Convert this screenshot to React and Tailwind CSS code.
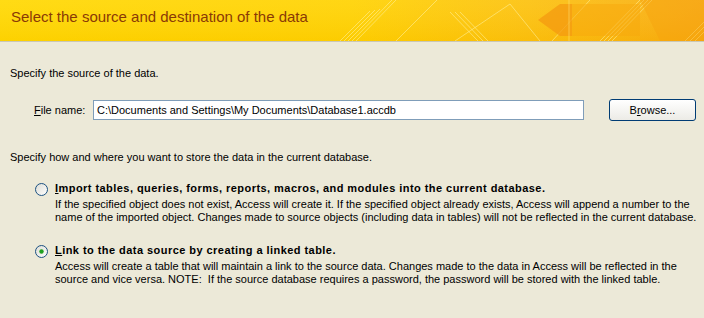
import React from 'react'

const font = { fontFamily: '"Liberation Sans", Arial, sans-serif' }

function Radio({ checked }){
  return (
    <svg width="13" height="13" viewBox="0 0 13 13" className="shrink-0">
      <defs>
        <linearGradient id={checked ? 'rg1' : 'rg0'} x1="0" y1="0" x2="1" y2="1">
          <stop offset="0" stopColor="#dcdcd4" />
          <stop offset="1" stopColor="#ffffff" />
        </linearGradient>
      </defs>
      <circle cx="6.5" cy="6.5" r="6" fill={`url(#${checked ? 'rg1' : 'rg0'})`} stroke="#1c5180" strokeWidth="1" />
      {checked && <circle cx="6.5" cy="6.5" r="2.2" fill="#21a121" />}
    </svg>
  )
}

function HeaderArt(){
  return (
    <svg className="absolute inset-0" width="704" height="41" viewBox="0 0 704 41">
      <defs>
        <linearGradient id="hg" x1="0" y1="0" x2="1" y2="0">
          <stop offset="0" stopColor="#ffd800" />
          <stop offset="0.5" stopColor="#ffd200" />
          <stop offset="0.75" stopColor="#fcc10c" />
          <stop offset="1" stopColor="#f8aa10" />
        </linearGradient>
        <linearGradient id="hv" x1="0" y1="0" x2="0" y2="1">
          <stop offset="0" stopColor="#ffffff" stopOpacity="0.08" />
          <stop offset="1" stopColor="#e8a000" stopOpacity="0.12" />
        </linearGradient>
      </defs>
      <rect width="704" height="41" fill="url(#hg)" />
      <rect width="704" height="41" fill="url(#hv)" />
      <g stroke="#fff3a0" strokeOpacity="0.55" strokeWidth="1">
        <line x1="340" y1="41" x2="370" y2="11" />
        <line x1="344" y1="41" x2="375" y2="10" />
        <line x1="348" y1="41" x2="380" y2="9" />
        <line x1="352" y1="41" x2="392" y2="0" />
        <line x1="356" y1="41" x2="396" y2="0" />
        <line x1="396" y1="41" x2="437" y2="0" />
        <line x1="455" y1="41" x2="510" y2="4" />
        <line x1="510" y1="4" x2="540" y2="41" />
        <line x1="450" y1="12" x2="478" y2="41" />
        <line x1="455" y1="12" x2="483" y2="41" />
        <line x1="460" y1="12" x2="488" y2="41" />
        <line x1="552" y1="41" x2="590" y2="0" />
        <line x1="600" y1="41" x2="640" y2="0" />
        <line x1="604" y1="41" x2="644" y2="0" />
        <line x1="608" y1="41" x2="648" y2="0" />
        <line x1="612" y1="41" x2="652" y2="0" />
        <line x1="685" y1="41" x2="704" y2="22" />
        <line x1="690" y1="41" x2="704" y2="27" />
        <line x1="695" y1="41" x2="704" y2="32" />
      </g>
      <polygon points="560,4 572,4 572,36 560,36 538,20" fill="#f49a10" fillOpacity="0.75" />
      <polygon points="572,4 640,4 640,36 572,36" fill="#f7a80c" fillOpacity="0.5" />
      <line x1="569" y1="0" x2="569" y2="41" stroke="#ffe070" strokeOpacity="0.6" />
      <polygon points="640,0 704,0 704,41 660,41" fill="#f6a20e" fillOpacity="0.45" />
    </svg>
  )
}

export default function App(){
  return (
    <div className="w-[704px] h-[318px] bg-[#ece9d8] text-[11px] leading-[13px] text-black overflow-hidden" style={font}>
      <div className="relative h-[41px]">
        <HeaderArt />
        <div className="relative pl-[11px] pt-[8px] text-[15px] leading-[18px] text-[#8a3a06]">
          Select the source and destination of the data
        </div>
      </div>
      <div className="h-px bg-[#c9c7b6]" />

      <div className="pl-[10px] pt-[25px]">Specify the source of the data.</div>

      <div className="flex items-center mt-[19px] pl-[34px]">
        <span className="w-[59px]"><span className="underline">F</span>ile name:</span>
        <div className="w-[491px] h-[20px] bg-white border border-[#7f9db9] flex items-center pl-[3px]">
          C:\Documents and Settings\My Documents\Database1.accdb
        </div>
        <button className="ml-[25px] w-[87px] h-[22px] rounded-[3px] border border-[#003c74] bg-gradient-to-b from-[#ffffff] to-[#ecebe6] text-[11px] text-black" style={font}>
          B<span className="underline">r</span>owse...
        </button>
      </div>

      <div className="pl-[10px] mt-[30px]">Specify how and where you want to store the data in the current database.</div>

      <div className="flex items-start pl-[35px] mt-[18px]">
        <div className="pt-px w-[20px]"><Radio checked={false} /></div>
        <div>
          <div className="font-bold tracking-[0.45px] whitespace-nowrap"><span className="underline">I</span>mport tables, queries, forms, reports, macros, and modules into the current database.</div>
          <div className="mt-[3px] whitespace-nowrap">
            If the specified object does not exist, Access will create it. If the specified object already exists, Access will append a number to the<br />
            name of the imported object. Changes made to source objects (including data in tables) will not be reflected in the current database.
          </div>
        </div>
      </div>

      <div className="flex items-start pl-[35px] mt-[20px]">
        <div className="pt-px w-[20px]"><Radio checked={true} /></div>
        <div>
          <div className="font-bold tracking-[0.45px] whitespace-nowrap"><span className="underline">L</span>ink to the data source by creating a linked table.</div>
          <div className="mt-[3px] whitespace-nowrap">
            Access will create a table that will maintain a link to the source data. Changes made to the data in Access will be reflected in the<br />
            source and vice versa. NOTE:&nbsp; If the source database requires a password, the password will be stored with the linked table.
          </div>
        </div>
      </div>
    </div>
  )
}
